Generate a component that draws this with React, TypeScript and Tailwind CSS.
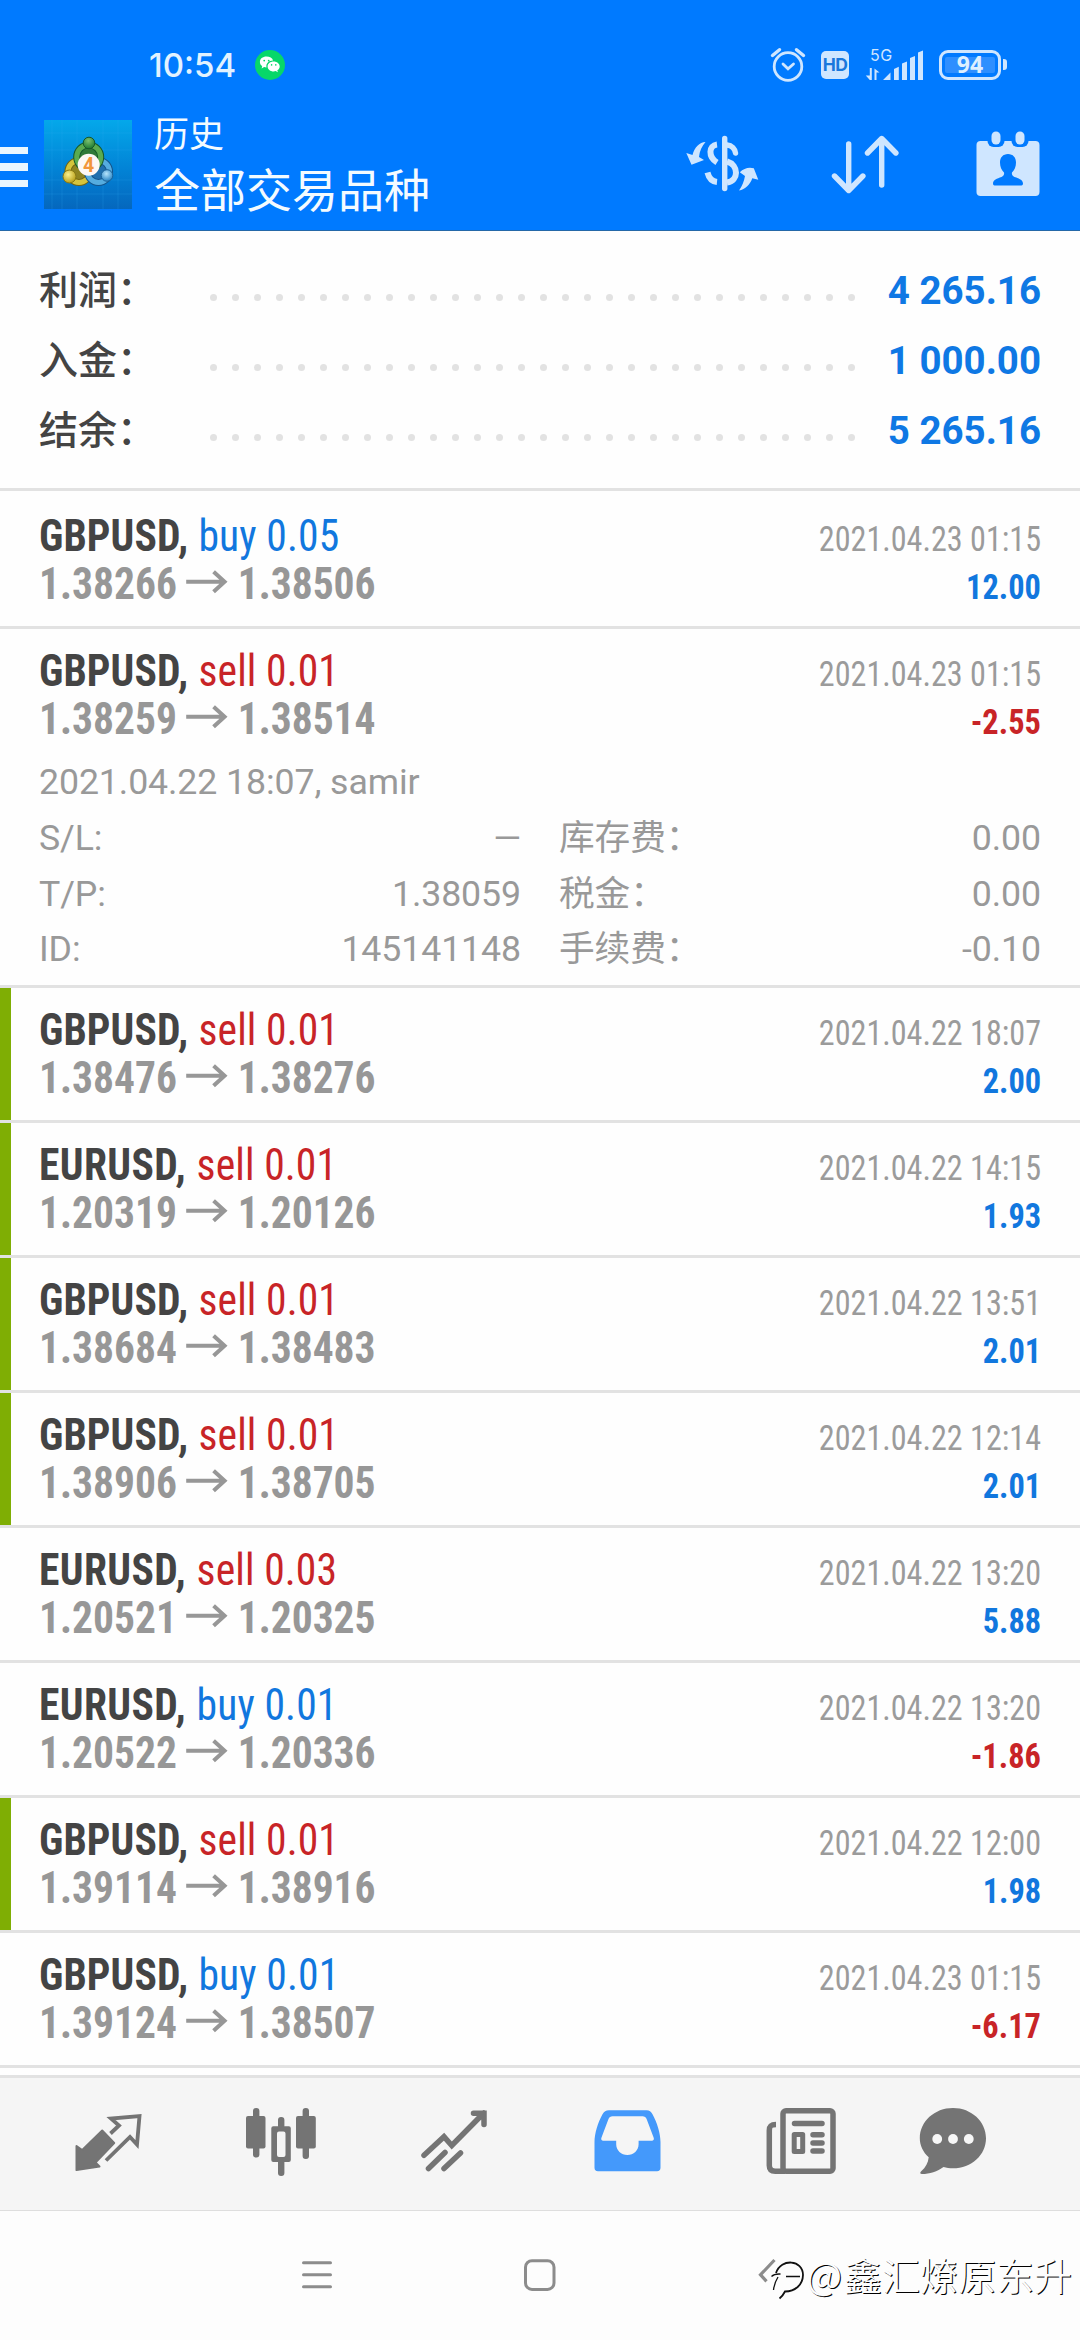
type Detail = { opened: string; rows: [string, string, string, string][] };

type Deal = {
  symbol: string;
  side: "buy" | "sell";
  volume: string;
  from: string;
  to: string;
  time: string;
  profit: string;
  marked?: boolean;
  detail?: Detail;
};

const summary = [
  { label: "利润：", value: "4 265.16" },
  { label: "入金：", value: "1 000.00" },
  { label: "结余：", value: "5 265.16" },
];

const deals: Deal[] = [
  { symbol: "GBPUSD", side: "buy", volume: "0.05", from: "1.38266", to: "1.38506", time: "2021.04.23 01:15", profit: "12.00" },
  {
    symbol: "GBPUSD", side: "sell", volume: "0.01", from: "1.38259", to: "1.38514", time: "2021.04.23 01:15", profit: "-2.55",
    detail: {
      opened: "2021.04.22 18:07, samir",
      rows: [
        ["S/L:", "—", "库存费：", "0.00"],
        ["T/P:", "1.38059", "税金：", "0.00"],
        ["ID:", "145141148", "手续费：", "-0.10"],
      ],
    },
  },
  { symbol: "GBPUSD", side: "sell", volume: "0.01", from: "1.38476", to: "1.38276", time: "2021.04.22 18:07", profit: "2.00", marked: true },
  { symbol: "EURUSD", side: "sell", volume: "0.01", from: "1.20319", to: "1.20126", time: "2021.04.22 14:15", profit: "1.93", marked: true },
  { symbol: "GBPUSD", side: "sell", volume: "0.01", from: "1.38684", to: "1.38483", time: "2021.04.22 13:51", profit: "2.01", marked: true },
  { symbol: "GBPUSD", side: "sell", volume: "0.01", from: "1.38906", to: "1.38705", time: "2021.04.22 12:14", profit: "2.01", marked: true },
  { symbol: "EURUSD", side: "sell", volume: "0.03", from: "1.20521", to: "1.20325", time: "2021.04.22 13:20", profit: "5.88" },
  { symbol: "EURUSD", side: "buy", volume: "0.01", from: "1.20522", to: "1.20336", time: "2021.04.22 13:20", profit: "-1.86" },
  { symbol: "GBPUSD", side: "sell", volume: "0.01", from: "1.39114", to: "1.38916", time: "2021.04.22 12:00", profit: "1.98", marked: true },
  { symbol: "GBPUSD", side: "buy", volume: "0.01", from: "1.39124", to: "1.38507", time: "2021.04.23 01:15", profit: "-6.17" },
];

function StatusBar() {
  return (
    <div className="flex h-[100px] items-center pt-[29px] pl-[149px] pr-[73px]">
      <span className="w-[106px] font-['Inter'] text-[33px] leading-[70px] font-medium text-[#e2f2ff]">10:54</span>
      <svg className="h-[30px] w-[30px]" viewBox="0 0 30 30">
        <circle cx="15" cy="15" r="15" fill="#07d769" />
        <path d="M11.5 6.6C7.6 6.6 4.9 9 4.9 12c0 1.800 .9 3.200 2.300 4.200l-.6 2.200 2.500-1.300c.8.200 1.500.3 2.400.3-.8-4 2.500-6.900 6.600-6.800-.700-2.400-3.400-4-6.600-4z" fill="#fff" />
        <path d="M18.700 11.400c-3.600 0-6.100 2.200-6.100 5s2.500 5 6.100 5c.7 0 1.300-.1 1.900-.3l2.300 1.200-.6-2c1.300-.9 2.400-2.300 2.400-3.900 0-2.800-2.700-5-6-5z" fill="#fff" />
        <g fill="#07d769">
          <circle cx="9.200" cy="10.600" r=".9" /><circle cx="13.700" cy="10.600" r=".9" />
          <circle cx="16.600" cy="14.900" r=".8" /><circle cx="20.800" cy="14.900" r=".8" />
        </g>
      </svg>
      <div className="ml-auto flex h-[36px] items-center text-[#cfe6ff]">
        <svg className="h-[36px] w-[36px]" viewBox="769 46 36 36" fill="none" stroke="currentColor" strokeLinecap="round">
          <circle cx="787" cy="65.500" r="13.800" strokeWidth="2.800" />
          <path d="M782 63l5 4.800 5.500-4.800" strokeWidth="2.800" />
          <path d="M771.500 54.500l7-5.800M802.500 54.500l-7-5.800" strokeWidth="3.400" />
        </svg>
        <span className="ml-[15px] flex h-[28px] w-[28px] items-center justify-center rounded-[5px] bg-[#cfe6ff] font-['Inter'] text-[17.500px] leading-none font-bold tracking-[-0.500px] text-[#1a78dc]">
          HD
        </span>
        <div className="ml-[16px] flex h-[32px] w-[60px] flex-col">
          <span className="pl-[5px] font-['Inter'] text-[16px] leading-[12px] tracking-[0.500px]">5G</span>
          <svg className="-mt-[12px] h-[32px] w-[60px]" viewBox="864 47 60 32" fill="currentColor">
            <path d="M868.800 66h2v12h-2l-4-4.500h4zM873.500 78V66.500l5 4h-3V78z" />
            <path d="M882 78l7.500-7.500V78zM893 67l4.800-2.200V78H893zM901 61.500l5-2V78h-5zM909 56l5-2V78h-5zM917 50.500l5-2V78h-5z" />
          </svg>
        </div>
        <div className="ml-[14px] flex items-center gap-[2px]">
          <span className="flex h-[30px] w-[62px] items-center justify-center rounded-[9px] border-[3.500px] border-[#cfe6ff] p-[3px]">
            <span className="flex h-[16px] w-full items-center justify-center rounded-[2px] bg-[#2e8fff] font-['Noto_Sans'] text-[23px] leading-none font-bold text-[#dff0ff]">94</span>
          </span>
          <span className="h-[11px] w-[4px] rounded-r-[3px] bg-[#cfe6ff]" />
        </div>
      </div>
    </div>
  );
}

function AppLogo() {
  return (
    <svg className="ml-[16px] h-[89px] w-[88px]" viewBox="44 120 88 89">
      <defs>
        <linearGradient id="sky" x1="0" y1="0" x2="0" y2="1">
          <stop offset="0" stopColor="#04a8ea" />
          <stop offset="0.550" stopColor="#0283d6" />
          <stop offset="1" stopColor="#0567bd" />
        </linearGradient>
        <radialGradient id="green" cx="0.450" cy="0.300" r="0.700"><stop offset="0" stopColor="#7cc070" /><stop offset="1" stopColor="#1d7a30" /></radialGradient>
        <radialGradient id="gold" cx="0.400" cy="0.350" r="0.700"><stop offset="0" stopColor="#fbf08c" /><stop offset="1" stopColor="#b39a12" /></radialGradient>
        <radialGradient id="azure" cx="0.450" cy="0.350" r="0.700"><stop offset="0" stopColor="#b6e4fb" /><stop offset="1" stopColor="#1b7cc0" /></radialGradient>
      </defs>
      <rect x="44" y="120" width="88" height="89" fill="url(#sky)" />
      <path d="M52 120v89M62 120v89M77 120v89M103 120v89M118 120v89M44 133h88M44 150h88M44 180h88M44 194h88" stroke="#39a9ee" strokeOpacity="0.200" strokeWidth="1" />
      <circle cx="79" cy="171.500" r="11" fill="#8f8420" stroke="#726410" strokeWidth="7" />
      <circle cx="79" cy="171.500" r="11" fill="none" stroke="#d4c43c" strokeWidth="5" />
      <circle cx="98.500" cy="171.500" r="11" fill="#1f6fae" stroke="#14548a" strokeWidth="7" />
      <circle cx="98.500" cy="171.500" r="11" fill="none" stroke="#55acdf" strokeWidth="5" />
      <circle cx="88.700" cy="157" r="12" fill="#2f7a38" stroke="#17582a" strokeWidth="7" />
      <circle cx="88.700" cy="157" r="12" fill="none" stroke="#5aab50" strokeWidth="5" />
      <circle cx="89" cy="143" r="5.800" fill="url(#green)" stroke="#17582a" />
      <circle cx="69.500" cy="176.500" r="6.500" fill="url(#gold)" stroke="#8a7a14" />
      <circle cx="107" cy="175.500" r="5.800" fill="url(#azure)" stroke="#1a6299" />
      <circle cx="88.700" cy="164.700" r="11" fill="#fdf8f4" />
      <text x="88.500" y="171.800" textAnchor="middle" fontFamily="Roboto" fontWeight="700" fontSize="19.500" fill="#f2963a">4</text>
    </svg>
  );
}

function TopBar() {
  return (
    <div className="flex h-[130px] items-start text-[#cfe6ff]">
      <div className="flex w-[28px] flex-col gap-[9px] pt-[46.500px]">
        <span className="h-[7.500px] bg-[#eaf6ff]" />
        <span className="h-[7.500px] bg-[#eaf6ff]" />
        <span className="h-[7.500px] bg-[#eaf6ff]" />
      </div>
      <div className="pt-[20px]"><AppLogo /></div>
      <div className="ml-[22px] flex flex-col pt-[12px] font-['Noto_Sans_CJK_SC',sans-serif] font-normal text-[#f4fbff]">
        <span className="text-[35px] leading-[40px]">历史</span>
        <span className="mt-[10px] text-[46px] leading-[50px]">全部交易品种</span>
      </div>
      <div className="ml-auto flex pt-[30px] pr-[40px]">
        <svg className="h-[66px] w-[76px]" viewBox="685 130 76 66" fill="none" stroke="currentColor" strokeLinecap="round">
          <path d="M724.700 138.500v50" strokeWidth="5.400" />
          <path d="M727 145c5 .5 8 4 8.500 8" strokeWidth="5.400" />
          <path d="M717 144.500c-8.500 1-9 12.500 0 18" strokeWidth="6" strokeLinecap="butt" />
          <path d="M727 161.500c12 3.500 12 19.500 0 21" strokeWidth="6" strokeLinecap="butt" />
          <path d="M707.500 172.500c1.500 6 4.500 9 9.500 9.500" strokeWidth="6" strokeLinecap="butt" />
          <path d="M705.500 142c-6 .5-11 5-13 13l-6.200-2 5.200 11.800 12.500-4.800-5-3c.5-6 3-11 6.500-15zM739 190.500c3-4 5-9 6-14.500l-5.200-3.800c4-4 9-5.500 14-4l4.500 11.500-6-1.500c-2 6-7 11-13.300 12.300z" fill="currentColor" stroke="none" />
        </svg>
        <svg className="ml-[70px] h-[66px] w-[70px]" viewBox="831 130 70 66" fill="none" stroke="currentColor" strokeWidth="5.400" strokeLinecap="round" strokeLinejoin="round">
          <path d="M848.700 144v46M834.500 176l14.200 14.500 14.200-14.500M881.700 185v-46M867.500 153l14.200-14.500 14.200 14.500" />
        </svg>
        <svg className="ml-[75px] h-[66px] w-[64px]" viewBox="976 130 64 66">
          <path d="M981 141h54.500c2.500 0 4 1.500 4 4v47c0 2.500-1.500 4-4 4h-55c-2.500 0-4-1.500-4-4v-47c0-2.500 1.500-4 4-4z" fill="currentColor" />
          <rect x="987.500" y="129" width="17" height="18" rx="6" fill="#007aff" />
          <rect x="1011.500" y="129" width="17" height="18" rx="6" fill="#007aff" />
          <rect x="991.500" y="131.500" width="9" height="13" rx="4.500" fill="currentColor" />
          <rect x="1015.500" y="131.500" width="9" height="13" rx="4.500" fill="currentColor" />
          <path d="M1008 154c-5 0-8 3.500-8 8.500 0 4.500 1.500 7.500 4 10 .5 2-.5 3.500-2.500 4.500-4.500 1.500-8.500 3-8.500 6.500v0c0 1.200.700 2 1.500 2h27c.8 0 1.500-.8 1.500-2v0c0-3.500-4-5-8.500-6.500-2-1-3-2.500-2.500-4.500 2.500-2.500 4-5.500 4-10 0-5-3-8.500-8-8.500z" fill="#007aff" />
        </svg>
      </div>
    </div>
  );
}

function Summary() {
  return (
    <section className="flex h-[257px] flex-col px-[39px] pt-[25px]">
      {summary.map((s) => (
        <div key={s.label} className="flex h-[70px] leading-[70px]">
          <span className="w-[171px] text-[39px] font-medium text-[#444]">{s.label}</span>
          <span className="flex w-[645px] items-center justify-between pt-[12px]">
            {Array.from({ length: 30 }, (_, i) => (
              <span key={i} className="h-[7px] w-[7px] rounded-full bg-[#e2e2e2]" />
            ))}
          </span>
          <span className="ml-auto text-[38.500px] font-bold text-[#0f78e4]">{s.value}</span>
        </div>
      ))}
    </section>
  );
}

function PriceArrow() {
  return (
    <svg className="mr-[10px] ml-[10px] h-[30px] w-[44.500px]" viewBox="0 0 42 30" preserveAspectRatio="none" fill="none" stroke="currentColor" strokeWidth="4">
      <path d="M0 12.700H39M27.500 2.700L38.500 12.700 27.500 22.700" />
    </svg>
  );
}

function DealRow({ deal, first }: { deal: Deal; first: boolean }) {
  const sideColor = deal.side === "buy" ? "text-[#1177de]" : "text-[#c82427]";
  const profitColor = deal.profit.startsWith("-") ? "text-[#c82427]" : "text-[#1177de]";
  const symbolTracking = deal.symbol === "EURUSD" ? "tracking-[0.400px]" : "tracking-[0.100px]";
  return (
    <li className={`relative border-b-[3px] border-[#e2e2e2] px-[39px] ${first ? "pt-[21px]" : "pt-[18px]"} ${deal.detail ? "pb-[8.500px]" : "pb-[18px]"}`}>
      {deal.marked && <span className="absolute inset-y-0 left-0 w-[11px] bg-[#7fae04]" />}
      <div className="font-['Roboto_Condensed','Roboto',sans-serif]">
        <div className="flex h-[48px] items-baseline justify-between leading-[48px]">
          <span className="origin-left scale-x-[0.945] text-[44px]">
            <span className={`font-bold text-[#444] ${symbolTracking}`}>{deal.symbol}, </span>
            <span className={`ml-[0.500px] tracking-[0.100px] ${sideColor}`}>{deal.side} {deal.volume}</span>
          </span>
          <span className="origin-right scale-x-[0.918] text-[35px] text-[#9b9b9b]">{deal.time}</span>
        </div>
        <div className="flex h-[48px] items-baseline justify-between leading-[48px]">
          <span className="flex origin-left scale-x-[0.943] items-center text-[44px] font-bold text-[#979797]">
            {deal.from}
            <PriceArrow />
            {deal.to}
          </span>
          <span className={`origin-right scale-x-[0.925] text-[35px] font-bold ${profitColor}`}>{deal.profit}</span>
        </div>
      </div>
      {deal.detail && (
        <div className="mt-[11px] text-[35.700px] leading-[56px] tracking-[-0.100px] text-[#999]">
          <p className="h-[56px]">{deal.detail.opened}</p>
          <div className="grid grid-cols-2 gap-x-[38px]">
            {deal.detail.rows.map((cells) => (
              <div key={cells[0]} className="contents">
                <div className="flex h-[55.500px] justify-between"><span>{cells[0]}</span><span>{cells[1]}</span></div>
                <div className="flex h-[55.500px] justify-between"><span>{cells[2]}</span><span>{cells[3]}</span></div>
              </div>
            ))}
          </div>
        </div>
      )}
    </li>
  );
}

function TabBar() {
  return (
    <nav className="flex h-[136px] border-t-[3px] border-b border-t-[#e2e2e2] border-b-[#dedede] bg-[#f5f5f5] pt-[24px] pl-[70px] text-[#747474]">
      <svg className="h-[80px] w-[80px]" viewBox="70 2102 80 80" fill="none" stroke="currentColor" strokeWidth="3.800">
        <path d="M76.500 2146l5.700 4 20-19.500 12 12.500-18.700 19.500 4 4-23 3.500z" fill="currentColor" strokeWidth="2" strokeLinejoin="round" />
        <path d="M110.500 2133.500l8.500-8-8-7 28.500-2.500-2.500 28.500-7-7.500-24 23.500" />
      </svg>
      <svg className="ml-[91px] h-[80px] w-[80px]" viewBox="241 2102 80 80" fill="currentColor">
        <rect x="253" y="2108" width="6.400" height="49.500" rx="3" /><rect x="246" y="2116" width="19.500" height="32.500" rx="2" />
        <rect x="302.600" y="2108" width="6.400" height="51" rx="3" /><rect x="296" y="2116" width="19.800" height="32.500" rx="2" />
        <rect x="278" y="2117" width="6.400" height="12" rx="3" /><rect x="278" y="2159" width="6.400" height="17" rx="3" />
        <path fillRule="evenodd" d="M273.300 2126.300h15.500a2 2 0 0 1 2 2v31.700a2 2 0 0 1-2 2h-15.500a2 2 0 0 1-2-2v-31.700a2 2 0 0 1 2-2zM279 2131.500a2 2 0 0 0-2 2v21.500a2 2 0 0 0 2 2h4.500a2 2 0 0 0 2-2v-21.500a2 2 0 0 0-2-2z" />
      </svg>
      <svg className="ml-[94px] h-[80px] w-[80px]" viewBox="415 2102 80 80" fill="none" stroke="currentColor" strokeWidth="5.500" strokeLinecap="round" strokeLinejoin="miter">
        <path d="M424 2155.300l20-18.600 7.800 8.800 32-32.500M473.500 2113.200h10.500v11.300M428.500 2168.500l16.500-16M444 2168.500l16.500-15.500" />
      </svg>
      <svg className="ml-[92px] h-[80px] w-[80px] text-[#4499fb]" viewBox="587 2102 80 80" fill="currentColor">
        <path fillRule="evenodd" d="M609 2110.300h37.500c3 0 4.500 1.200 6 4 4.500 8 8 19 8 28v25.500c0 2.200-1.200 3.400-3.400 3.400h-59.200c-2.200 0-3.400-1.200-3.400-3.400v-25.500c0-9 3.500-20 8-28 1.500-2.800 3.500-4 6.500-4zM612.500 2116.300c-2 0-3.200.8-4 2.700l-7 18.500c-.8 2 0 3.200 1.800 3.200h12.900v3.500c0 6 5 10.800 11.200 10.800s11.200-4.800 11.200-10.800v-3.500h13.200c1.800 0 2.600-1.200 1.800-3.200l-7-18.500c-.8-1.900-2-2.700-4-2.700z" />
      </svg>
      <svg className="ml-[94px] h-[80px] w-[80px]" viewBox="761 2102 80 80" fill="none" stroke="currentColor" strokeWidth="5.500">
        <rect x="783" y="2110.700" width="50" height="60.500" rx="3" />
        <path d="M776 2124.500c-5 0-6.700 1.500-6.700 6v35c0 4 2 5.700 6 5.700h10" />
        <path d="M794.500 2123.500h27.500M813 2134.700h9M813 2143h9M813 2151h9" strokeLinecap="round" />
        <rect x="794.200" y="2134.500" width="8.500" height="17" strokeWidth="5" strokeLinejoin="round" />
      </svg>
      <svg className="ml-[72px] h-[80px] w-[80px]" viewBox="913 2102 80 80" fill="currentColor">
        <path d="M953 2108c18.500 0 33 13.500 33 30.200s-14.500 30.100-33 30.100c-3.500 0-6.500-.3-9.500-1.200-6 4.500-14 7-21.500 7-2 0-2.300-1.300-.8-2.800 4.500-4 7-8.500 7.500-14-5.700-5.300-8.900-12-8.900-19.100 0-16.700 14.700-30.200 33.200-30.200z" />
        <g fill="#f7f7f7"><circle cx="937.200" cy="2139" r="4.900" /><circle cx="953" cy="2139" r="4.900" /><circle cx="968.800" cy="2139" r="4.900" /></g>
      </svg>
    </nav>
  );
}

function SystemNav() {
  return (
    <div className="relative h-[129px] bg-[#fdfdfd]">
      <div className="flex pt-[46px] pl-[300px]">
        <svg className="h-[36px] w-[34px]" viewBox="300 2257 34 36" fill="none" stroke="#8c8c8c" strokeWidth="3" strokeLinecap="round">
          <path d="M303.500 2262.700h27M303.500 2274.700h27M303.500 2286.700h27" />
        </svg>
        <svg className="ml-[188px] h-[36px] w-[36px]" viewBox="522 2257 36 36" fill="none" stroke="#8c8c8c" strokeWidth="3">
          <rect x="525.500" y="2260.700" width="28.500" height="28.700" rx="6.500" />
        </svg>
        <svg className="ml-[198px] h-[50px] w-[50px]" viewBox="756 2257 50 50" fill="none">
          <path d="M774.500 2260l-14 14.800 6 6.500" stroke="#8c8c8c" strokeWidth="3.200" />
          <path d="M776 2273c5-15 27-13.500 27 2-.2 10-8 16.500-18 16.500-1.500 3-3 5-5.500 7" stroke="#111" strokeWidth="1.800" />
          <path d="M771.500 2276.500c3-3 6-2.500 9-2.500M773.500 2290c.5-5 2-9 4.500-13M786 2276.500h14" stroke="#111" strokeWidth="1.300" />
        </svg>
      </div>
      <span className="absolute top-[38px] right-[8px] font-['Noto_Sans_CJK_SC',sans-serif] text-[38px] leading-[50px] font-[350] whitespace-nowrap text-[#fdfdfd] [text-shadow:1px_1px_0_#000]">
        <span className="tracking-[2px]">@</span>鑫汇燎原东升
      </span>
    </div>
  );
}

export default function App() {
  return (
    <main className="flex h-[2340px] w-[1080px] flex-col overflow-hidden bg-[#fefefe] font-['Roboto','Noto_Sans_CJK_SC',sans-serif]">
      <header className="h-[231px] border-b border-[#2468a8] bg-[#007aff]">
        <StatusBar />
        <TopBar />
      </header>
      <Summary />
      <ul className="border-t-[3px] border-[#e2e2e2]">
        {deals.map((d, i) => <DealRow key={i} deal={d} first={i === 0} />)}
      </ul>
      <div className="flex-1" />
      <TabBar />
      <SystemNav />
    </main>
  );
}
